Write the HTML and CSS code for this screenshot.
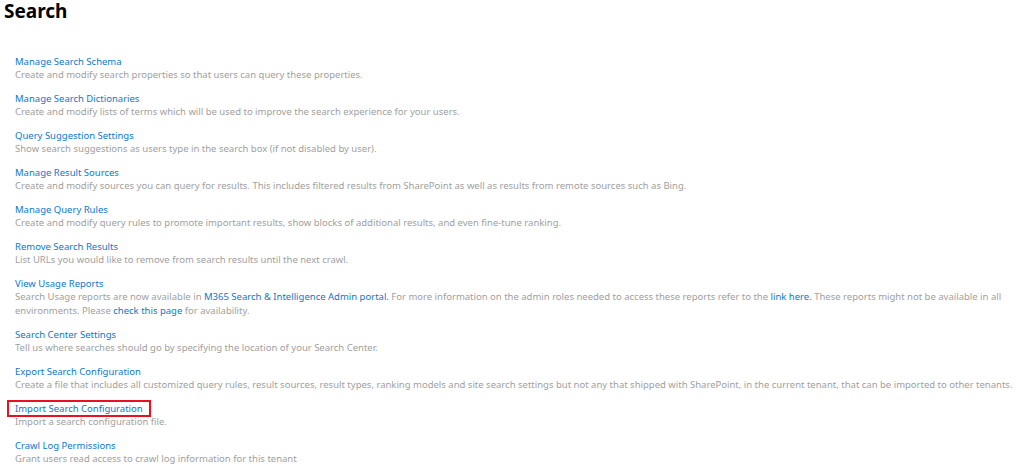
FILE: index.html
```html
<!DOCTYPE html>
<html>
<head>
<meta charset="utf-8">
<link rel="stylesheet" href="styles.css">
</head>
<body>
<h1 class="title">Search</h1>
<ul class="list">
  <li class="item">
    <a class="item-link">Manage Search Schema</a>
    <div class="desc">Create and modify search properties so that users can query these properties.</div>
  </li>
  <li class="item">
    <a class="item-link">Manage Search Dictionaries</a>
    <div class="desc">Create and modify lists of terms which will be used to improve the search experience for your users.</div>
  </li>
  <li class="item">
    <a class="item-link">Query Suggestion Settings</a>
    <div class="desc">Show search suggestions as users type in the search box (if not disabled by user).</div>
  </li>
  <li class="item">
    <a class="item-link">Manage Result Sources</a>
    <div class="desc">Create and modify sources you can query for results. This includes filtered results from SharePoint as well as results from remote sources such as Bing.</div>
  </li>
  <li class="item">
    <a class="item-link">Manage Query Rules</a>
    <div class="desc">Create and modify query rules to promote important results, show blocks of additional results, and even fine-tune ranking.</div>
  </li>
  <li class="item">
    <a class="item-link">Remove Search Results</a>
    <div class="desc">List URLs you would like to remove from search results until the next crawl.</div>
  </li>
  <li class="item">
    <a class="item-link">View Usage Reports</a>
    <div class="desc">Search Usage reports are now available in <a class="inline-link">M365 Search &amp; Intelligence Admin portal.</a> For more information on the admin roles needed to access these reports refer to the <a class="inline-link">link here.</a> These reports might not be available in all environments. Please <a class="inline-link">check this page</a> for availability.</div>
  </li>
  <li class="item">
    <a class="item-link">Search Center Settings</a>
    <div class="desc">Tell us where searches should go by specifying the location of your Search Center.</div>
  </li>
  <li class="item">
    <a class="item-link">Export Search Configuration</a>
    <div class="desc">Create a file that includes all customized query rules, result sources, result types, ranking models and site search settings but not any that shipped with SharePoint, in the current tenant, that can be imported to other tenants.</div>
  </li>
  <li class="item">
    <a class="item-link"><span class="highlighted">Import Search Configuration</span></a>
    <div class="desc">Import a search configuration file.</div>
  </li>
  <li class="item">
    <a class="item-link">Crawl Log Permissions</a>
    <div class="desc">Grant users read access to crawl log information for this tenant</div>
  </li>
</ul>
</body>
</html>
```
FILE: styles.css
```css
html, body {
  margin: 0;
  padding: 0;
  background: #ffffff;
}
body {
  font-family: "Noto Sans", "Open Sans", sans-serif;
  padding: 0 6px 0 4px;
}
.title {
  margin: 0;
  font-size: 19px;
  line-height: 22px;
  font-weight: 700;
  color: #000;
}
.list {
  list-style: none;
  margin: 33px 0 0 0;
  padding: 0 0 0 11px;
}
.item {
  margin-bottom: 10px;
}
.item-link {
  display: block;
  font-size: 9.5px;
  line-height: 13px;
  color: #0e78cc;
  text-decoration: none;
}
.highlighted {
  position: relative;
}
.highlighted::after {
  content: "";
  position: absolute;
  left: -8px;
  right: -8px;
  top: -2px;
  bottom: -2px;
  border: 2px solid #e81123;
}
.desc {
  font-size: 9.5px;
  line-height: 14px;
  color: #a0a0a0;
}
.inline-link {
  color: #0e78cc;
}
```
